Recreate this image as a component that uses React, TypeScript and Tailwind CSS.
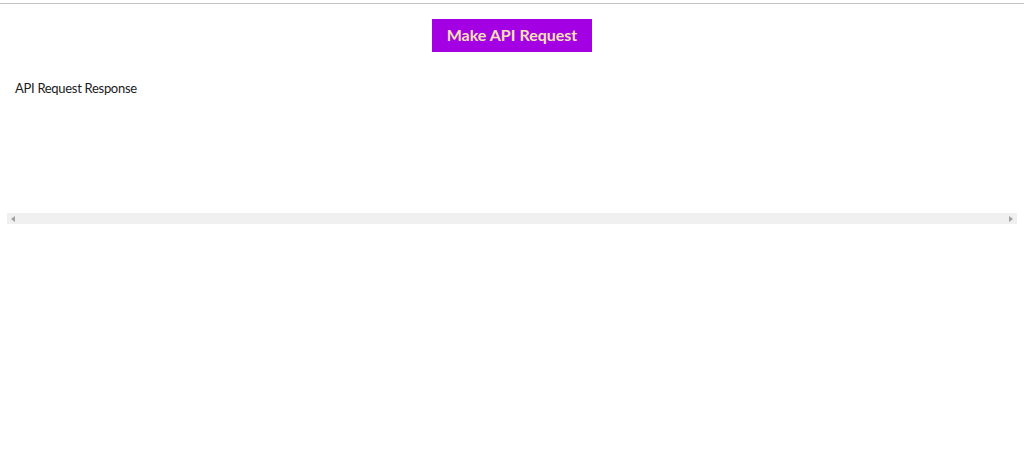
export default function App() {
  return (
    <div className="min-h-[451px] bg-white font-['Lato',sans-serif]">
      <div className="h-[3px]" />
      <div className="h-px bg-[#c4c4c4]" />
      <div className="flex justify-center pt-[15px]">
        <button className="h-[33px] w-[160px] bg-[#a300e3] pb-[2px] text-[16px] font-bold text-[#f7e2b4]">
          Make API Request
        </button>
      </div>
      <div className="px-[15px] pt-[27px] text-[13px] leading-[18px] tracking-[-0.3px] text-[#1a1a1a]">
        API Request Response
      </div>
      <div className="h-[116px]" />
      <div className="mx-[7px] flex h-[11px] items-center justify-between bg-[#f0f0f0] px-[4px]">
        <span className="h-0 w-0 border-y-[3.5px] border-r-[4px] border-y-transparent border-r-[#a0a0a0]" />
        <span className="h-0 w-0 border-y-[3.5px] border-l-[4px] border-y-transparent border-l-[#a0a0a0]" />
      </div>
    </div>
  );
}
